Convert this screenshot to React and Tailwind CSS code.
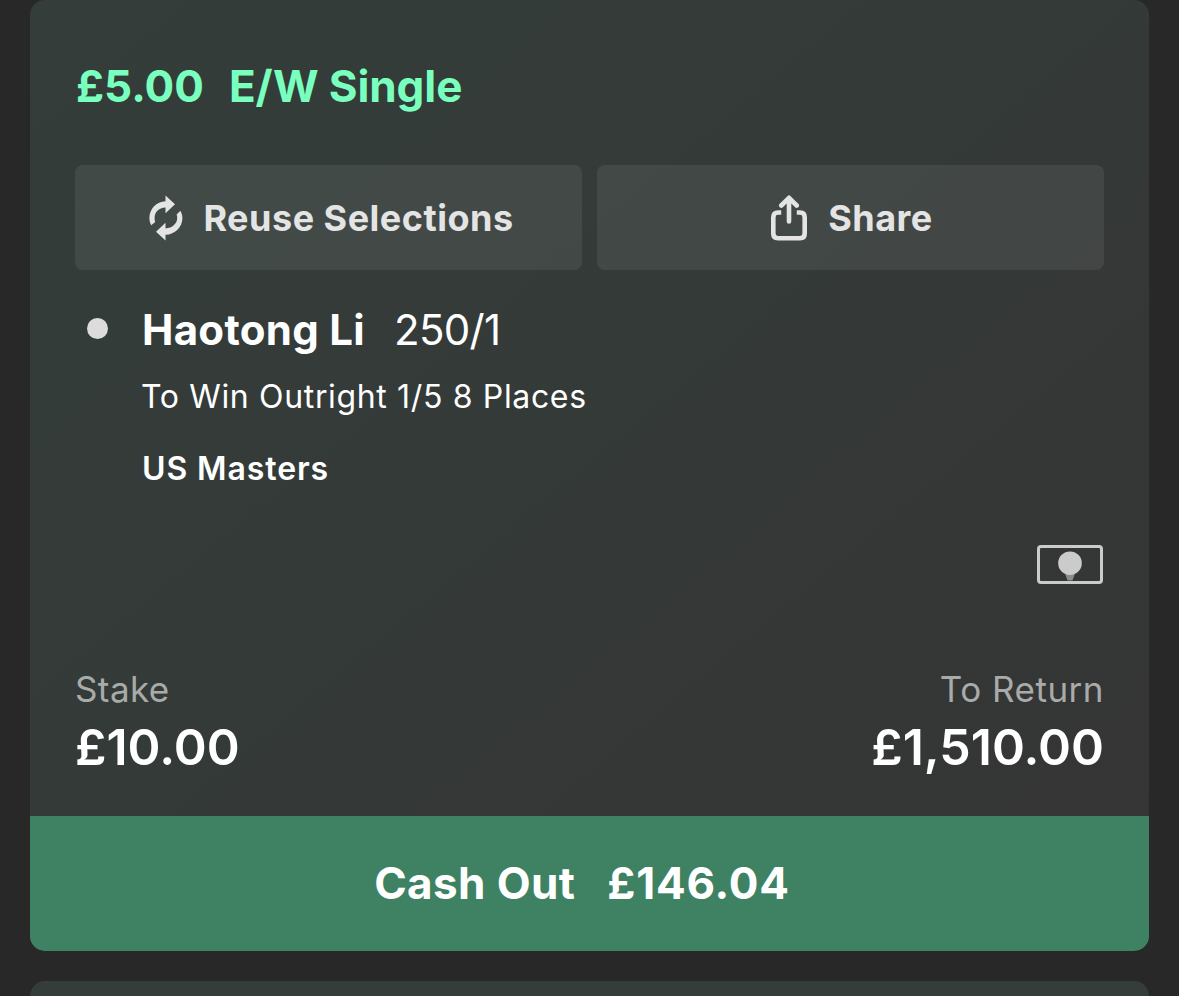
const bet = {
	unitStake: "£5.00",
	type: "E/W Single",
	selection: "Haotong Li",
	odds: "250/1",
	market: "To Win Outright 1/5 8 Places",
	event: "US Masters",
	stake: "£10.00",
	toReturn: "£1,510.00",
	cashOut: "£146.04",
};

const ReuseIcon = () => (
	<svg className="w-[34px] h-[46px]" viewBox="0 0 34 46" fill="currentColor">
		<path d="M16.5 0.5 L26 9.3 L16.5 18.2 V12.6 C9.5 13 5.6 17.5 5.6 23 C5.6 24.8 5.8 26 6.2 27 L2.2 30.2 C0.8 27.5 0.4 25.3 0.4 23 C0.4 14 7.5 6.4 16.5 6.2 Z" />
		<path d="M16.5 45.5 L7 36.7 L16.5 27.8 V33.4 C23.5 33 28.2 28.5 28.2 23 C28.2 21.6 28 20.6 27.6 19.6 L31.4 15.8 C32.8 18.5 33.4 20.7 33.4 23 C33.4 32 26 39.6 16.5 39.8 Z" />
	</svg>
);

const ShareIcon = () => (
	<svg
		className="w-[38px] h-[46px]"
		viewBox="0 0 38 46"
		fill="none"
		stroke="currentColor"
		strokeWidth="4.6"
		strokeLinecap="round"
		strokeLinejoin="round"
	>
		<path d="M11.2 17.5 H8 Q3.3 17.5 3.3 22.2 V38.5 Q3.3 43.2 8 43.2 H30 Q34.7 43.2 34.7 38.5 V22.2 Q34.7 17.5 30 17.5 H26.8" strokeLinecap="butt" />
		<path d="M19 26.5 V3.5 M11.3 10.5 L19 2.8 L26.7 10.5" />
	</svg>
);

const GolfIcon = () => (
	<svg className="w-[66px] h-[39px]" viewBox="0 0 66 39" fill="none">
		<rect x="1.5" y="1.5" width="63" height="36" rx="2.5" stroke="#cbcbcb" strokeWidth="3" />
		<path d="M27.5 27 H38.5 L35.5 35.5 H30.5 Z" fill="#8b8b8b" />
		<circle cx="33" cy="18.2" r="11.8" fill="#cbcbcb" />
	</svg>
);

const ActionButton = ({ icon, className, children }) => (
	<button
		className={`h-[105px] flex items-center justify-center gap-[20px] rounded-[8px] bg-white/[0.07] text-[#e4e4e4] text-[36px] font-bold tracking-[0.5px] ${className}`}
	>
		{icon}
		<span>{children}</span>
	</button>
);

const App = () => {
	return (
		<div
			className="h-screen overflow-hidden bg-[#282828] px-[30px] text-white whitespace-nowrap"
			style={{ fontFamily: "Inter, sans-serif" }}
		>
			<div className="h-[951px] flex flex-col rounded-[15px] overflow-hidden bg-[linear-gradient(140deg,#343d3a_0%,#343a38_48%,#353636_72%,#353535_100%)]">
				<div className="flex-1 flex flex-col pt-[56px] px-[45px]">
					<h2 className="flex gap-[25px] pl-[1px] text-[44px] leading-[60px] font-bold text-[#79ffbe]">
						<span>{bet.unitStake}</span>
						<span className="tracking-[-0.1px]">{bet.type}</span>
					</h2>

					<div className="grid grid-cols-2 gap-[15px] mt-[49px]">
						<ActionButton icon={<ReuseIcon />} className="pl-[6px]">Reuse Selections</ActionButton>
						<ActionButton icon={<ShareIcon />} className="pl-[2px]">Share</ActionButton>
					</div>

					<div className="flex mt-[30px]">
						<div className="w-[21px] h-[21px] mt-[18px] ml-[12px] mr-[34px] rounded-full bg-[#dcdcdc]" />
						<div>
							<div className="flex gap-[29px] text-[42px] leading-[60px]">
								<span className="font-bold tracking-[0.3px]">{bet.selection}</span>
								<span className="tracking-[-0.7px]">{bet.odds}</span>
							</div>
							<p className="mt-[1px] -ml-[1px] text-[32px] leading-[72px] tracking-[0.65px]">{bet.market}</p>
							<p className="text-[32px] leading-[72px] tracking-[0.9px] font-semibold">{bet.event}</p>
						</div>
					</div>

					<div className="flex justify-end mt-[40px] pr-[1px]">
						<GolfIcon />
					</div>

					<div className="flex justify-between mt-[79px]">
						<div>
							<p className="text-[35px] leading-[52px] tracking-[0.4px] text-[#a9abaa]">Stake</p>
							<p className="mt-[1px] text-[50px] leading-[62px] font-semibold">{bet.stake}</p>
						</div>
						<div className="text-right">
							<p className="text-[35px] leading-[52px] tracking-[0.5px] text-[#a9abaa]">To Return</p>
							<p className="mt-[1px] text-[50px] leading-[62px] font-semibold">{bet.toReturn}</p>
						</div>
					</div>
				</div>

				<button className="h-[135px] flex items-center justify-center gap-[32px] pr-[15px] pb-[2px] bg-[#3e8263] text-[44px] font-bold">
					<span className="tracking-[0.4px]">Cash Out</span>
					<span className="tracking-[0.8px]">{bet.cashOut}</span>
				</button>
			</div>

			<div className="mt-[30px] h-[200px] rounded-[15px] bg-[#343d3a]" />
		</div>
	);
};

export default App;
